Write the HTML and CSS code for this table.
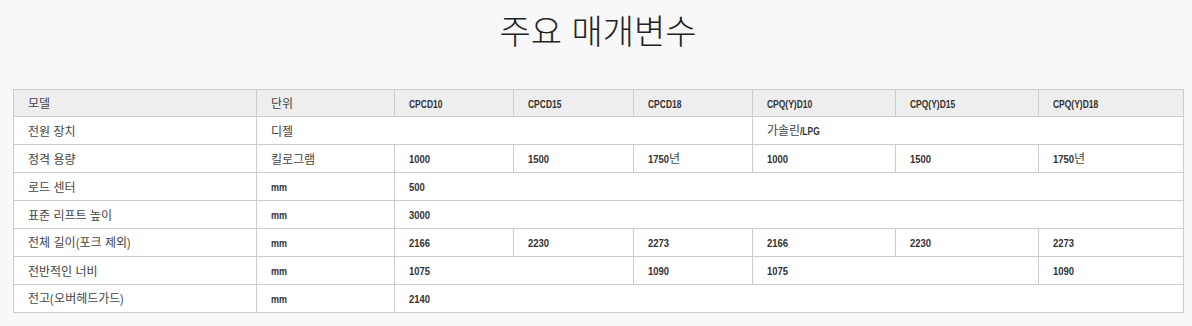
FILE: index.html
```html
<!DOCTYPE html>
<html lang="ko">
<head>
<meta charset="utf-8">
<title>주요 매개변수</title>
<link rel="stylesheet" href="styles.css">
</head>
<body>
<div class="page">
  <h1 class="title">주요 매개변수</h1>
  <table class="spec">
    <colgroup>
      <col class="c1"><col class="c2"><col class="c3"><col class="c4"><col class="c5"><col class="c6"><col class="c7"><col class="c8">
    </colgroup>
    <thead>
      <tr>
        <th>모델</th><th>단위</th><th><span class="lat">CPCD10</span></th><th><span class="lat">CPCD15</span></th><th><span class="lat">CPCD18</span></th><th><span class="lat">CPQ(Y)D10</span></th><th><span class="lat">CPQ(Y)D15</span></th><th><span class="lat">CPQ(Y)D18</span></th>
      </tr>
    </thead>
    <tbody>
      <tr><td>전원 장치</td><td colspan="4">디젤</td><td colspan="3">가솔린<span class="lat">/LPG</span></td></tr>
      <tr><td>정격 용량</td><td>킬로그램</td><td><span class="lat num">1000</span></td><td><span class="lat num">1500</span></td><td><span class="lat num num4">1750</span>년</td><td><span class="lat num">1000</span></td><td><span class="lat num">1500</span></td><td><span class="lat num num4">1750</span>년</td></tr>
      <tr><td>로드 센터</td><td><span class="lat mm">mm</span></td><td colspan="6"><span class="lat num">500</span></td></tr>
      <tr><td>표준 리프트 높이</td><td><span class="lat mm">mm</span></td><td colspan="6"><span class="lat num">3000</span></td></tr>
      <tr><td>전체 길이<span class="lat paren">(</span>포크 제외<span class="lat paren">)</span></td><td><span class="lat mm">mm</span></td><td><span class="lat num">2166</span></td><td><span class="lat num">2230</span></td><td><span class="lat num">2273</span></td><td><span class="lat num">2166</span></td><td><span class="lat num">2230</span></td><td><span class="lat num">2273</span></td></tr>
      <tr><td>전반적인 너비</td><td><span class="lat mm">mm</span></td><td colspan="2"><span class="lat num">1075</span></td><td><span class="lat num">1090</span></td><td colspan="2"><span class="lat num">1075</span></td><td><span class="lat num">1090</span></td></tr>
      <tr><td>전고<span class="lat paren">(</span>오버헤드가드<span class="lat paren">)</span></td><td><span class="lat mm">mm</span></td><td colspan="6"><span class="lat num">2140</span></td></tr>
    </tbody>
  </table>
</div>
</body>
</html>
```
FILE: styles.css
```css
html, body {
  margin: 0;
  padding: 0;
  background: #f8f8f8;
}
body {
  font-family: "Noto Sans CJK KR", "Noto Sans", sans-serif;
  color: #333;
}
.page {
  padding: 0 9px 0 13px;
}
.title {
  margin: 0;
  padding-top: 8px;
  height: 89px;
  box-sizing: border-box;
  text-align: center;
  font-size: 34px;
  line-height: 44px;
  font-weight: 300;
  color: #222;
}
.spec {
  width: 1170px;
  border-collapse: collapse;
  table-layout: fixed;
  background: #fff;
  font-size: 12px;
}
.c1 { width: 243px; }
.c2 { width: 138px; }
.c3 { width: 119px; }
.c4 { width: 120px; }
.c5 { width: 119px; }
.c6 { width: 143px; }
.c7 { width: 143px; }
.c8 { width: 145px; }
.spec th, .spec td {
  border: 1px solid #cccccc;
  padding: 0 14px;
  text-align: left;
  height: 27px;
  line-height: 16px;
  white-space: nowrap;
  color: #444;
}
.spec th {
  background: #eeeeee;
  font-weight: 400;
  height: 26px;
}
.spec .lat {
  display: inline-block;
  font-family: "Liberation Sans", Arial, sans-serif;
  font-weight: 700;
  font-size: 11px;
  color: #333;
  transform: scaleX(0.77);
  transform-origin: left center;
  vertical-align: baseline;
}
.spec .num {
  transform: scaleX(0.86);
}
.spec .num4 {
  margin-right: -3.4px;
}
.spec .mm {
  transform: scaleX(0.82);
}
.spec .paren {
  font-weight: 400;
  font-size: 12px;
  transform: scaleX(0.85);
  color: #444;
}
```
